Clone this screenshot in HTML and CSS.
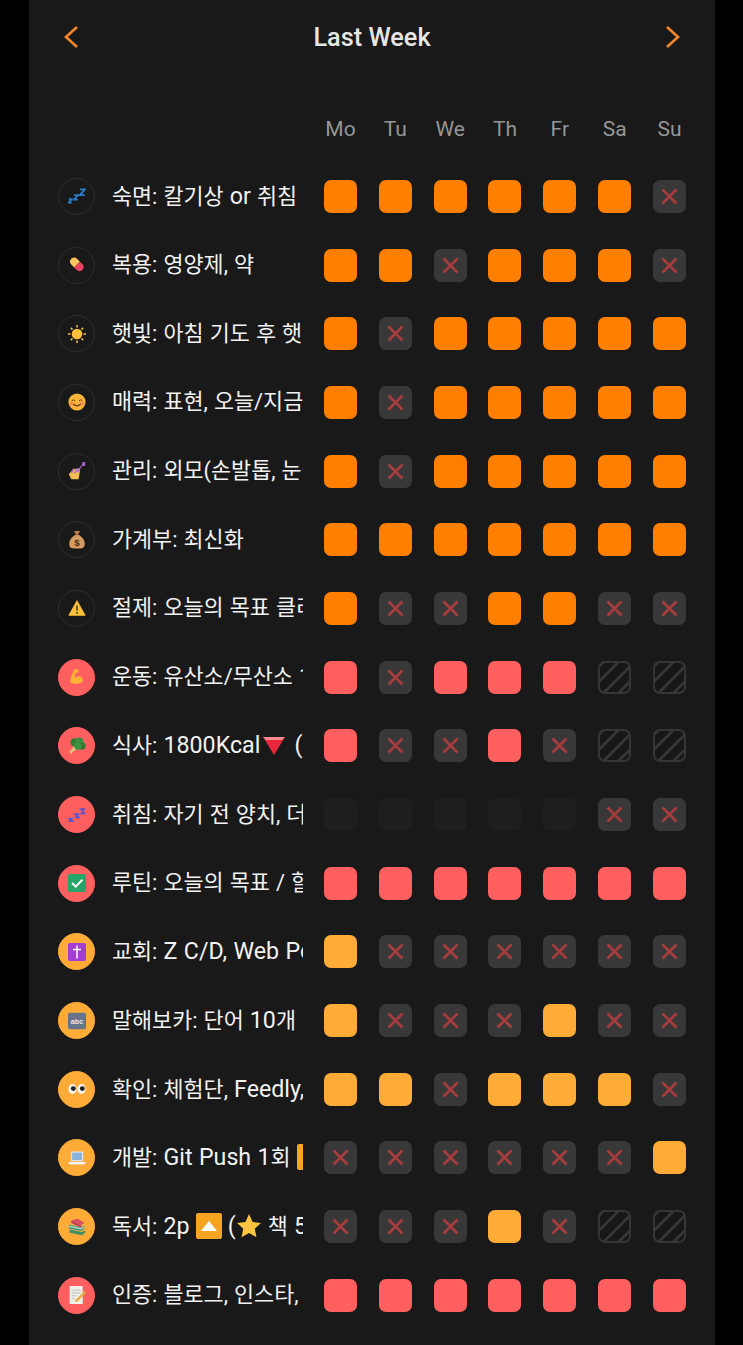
FILE: index.html
```html
<!DOCTYPE html>
<html lang="ko">
<head>
    <meta charset="UTF-8">
    <title>Last Week</title>
    <link rel="stylesheet" href="styles.css">
</head>
<body>
<svg class="defs" width="0" height="0">
    <symbol id="cross" viewBox="0 0 33 33"><path d="M9.500 9.500l14 14M23.500 9.500l-14 14" fill="none" stroke="#a53d3f" stroke-width="2.800"/></symbol>
    <symbol id="down" viewBox="0 0 22 22"><path d="M0 3h22L11 21z" fill="#e8263c"/><path d="M0 3h22l-3 3H3z" fill="#ff8a8f"/></symbol>
    <symbol id="up" viewBox="0 0 26 26"><rect width="26" height="26" rx="2" fill="#f7a423"/><path d="M13 8l8 10H5z" fill="#fff"/></symbol>
    <symbol id="star" viewBox="0 0 24 24"><path d="M12 1l3.300 7.300 7.700.9-5.700 5.300 1.600 7.900-6.900-4-6.900 4 1.600-7.900L1 9.200l7.700-.9z" fill="#fdc63c"/></symbol>
    <symbol id="i-zzz" viewBox="0 0 22 22"><path d="M1 15h3.500l-3.500 4h3.500M7.500 10h4.500l-4.500 5.500h4.500M14.500 3h6l-6 7h6" fill="none" stroke="#2b7cc9" stroke-width="2.200"/></symbol>
    <symbol id="i-pill" viewBox="0 0 22 22"><path d="M4 3.500a5 5 0 0 1 7 0l3.500 3.500-7 7L4 10.500a5 5 0 0 1 0-7z" fill="#fbc65e"/><path d="M14.500 7l3.500 3.500a5 5 0 0 1-7 7L7.500 14z" fill="#ee3f5e"/></symbol>
    <symbol id="i-sun" viewBox="0 0 22 22"><circle cx="11" cy="11" r="6.500" fill="#fdbf3c"/><path d="M11 0v3M11 19v3M0 11h3M19 11h3M3.500 3.500l2 2M16.500 16.500l2 2M18.500 3.500l-2 2M5.500 16.500l-2 2" stroke="#f9c553" stroke-width="1.800"/></symbol>
    <symbol id="i-smile" viewBox="0 0 22 22"><circle cx="11" cy="11" r="10.500" fill="#fbb437"/><circle cx="4.500" cy="13" r="2.500" fill="#f58f4a"/><circle cx="17.500" cy="13" r="2.500" fill="#f58f4a"/><path d="M4.500 9.500q2-2.500 4 0M13.500 9.500q2-2.500 4 0" fill="none" stroke="#5b3a1a" stroke-width="1.200"/><path d="M6.500 13.500q4.500 4.500 9 0" fill="none" stroke="#6d3a1e" stroke-width="1.500"/></symbol>
    <symbol id="i-nail" viewBox="0 0 22 22"><path d="M1 15l5-6 9-1-2 13H4z" fill="#f4bd4c"/><path d="M4 13l4-5M8 14l4-6M12 12l2-4" stroke="#b174c8" stroke-width="2"/><path d="M14 8l5-6" stroke="#9a5bb8" stroke-width="1.500"/><rect x="17.500" y="0" width="3.500" height="5" rx="1" fill="#a864d0"/></symbol>
    <symbol id="i-warn" viewBox="0 0 22 22"><path d="M11 2L21 20H1z" fill="#fdc23a" stroke="#fdc23a" stroke-linejoin="round"/><path d="M11 8v6.500M11 16v2" stroke="#3e3420" stroke-width="1.800"/></symbol>
    <symbol id="i-arm" viewBox="0 0 22 22"><path d="M8 1l5 1.500-.5 3-3 .5-1.500 6q5.500-3.500 9-.5 2.500 3 .5 6-6 3-13 1l-2-1q1-9 6-16.500z" fill="#fbb237"/></symbol>
    <symbol id="i-broc" viewBox="0 0 22 22"><path d="M1 18l3-2 3-5 4 4-5 3-2 3z" fill="#e2bf7c"/><circle cx="8" cy="6.500" r="5" fill="#2f7d32"/><circle cx="14" cy="5" r="4.500" fill="#388e3c"/><circle cx="17" cy="11" r="4.500" fill="#2e7a33"/><circle cx="12" cy="11" r="4.500" fill="#3c9441"/></symbol>
    <symbol id="i-zzp" viewBox="0 0 22 22"><path d="M1 18.500h4l-3.500-3h4.500M8 14h5l-4-4h5M15 9h5l-4-5h5" fill="none" stroke="#5e52c6" stroke-width="2.200"/></symbol>
    <symbol id="i-check" viewBox="0 0 22 22"><rect x="0" y="0" width="22" height="22" rx="2" fill="#27a468"/><path d="M5 11l4.500 4.500L17.500 7" fill="none" stroke="#fff" stroke-width="2.400"/></symbol>
    <symbol id="i-latin" viewBox="0 0 22 22"><rect x="0" y="0" width="22" height="22" rx="2" fill="#a23ed0"/><path d="M11 3v16M6 8h10" stroke="#fff" stroke-width="1.800"/></symbol>
    <symbol id="i-eyes" viewBox="0 0 22 22"><ellipse cx="5.500" cy="11" rx="5" ry="6" fill="#f7f4ee"/><ellipse cx="16.500" cy="11" rx="5" ry="6" fill="#f7f4ee"/><circle cx="6.500" cy="10.500" r="3" fill="#23211f"/><circle cx="17.500" cy="10.500" r="3" fill="#23211f"/></symbol>
    <symbol id="i-laptop" viewBox="0 0 22 22"><rect x="3.500" y="3" width="15" height="12" rx="1" fill="#dfe3ea"/><rect x="5" y="4.500" width="12" height="9" fill="#8ab4dc"/><path d="M0 16h22l-2 3H2z" fill="#f1f2f4"/></symbol>
    <symbol id="i-books" viewBox="0 0 22 22"><path d="M2 14l15 3 4-2v3l-4 3-15-3z" fill="#3e8f68"/><path d="M1 8l15 3 4-2v4l-4 3-15-3z" fill="#4f9e88"/><path d="M1 10l15 3 4-2" fill="none" stroke="#f1e7d4"/><path d="M4 3l8-2 8 5-4 3z" fill="#d94f66"/><path d="M4 3l12 6v3L4 6z" fill="#c23f58"/></symbol>
    <symbol id="i-memo" viewBox="0 0 22 22"><rect x="2" y="0" width="16" height="22" fill="#f2efe9"/><path d="M4.500 5h11M4.500 8.500h11M4.500 12h6M4.500 15.500h4" stroke="#a9b0ba"/><path d="M20 6l2 2-10 11-3.500 1 1-3.500z" fill="#e8b04a"/></symbol>
</svg>

<main class="panel">
    <header class="top">
        <svg class="chev" viewBox="0 0 16 24"><path d="M14 2L3 12l11 10"/></svg>
        <h1>Last Week</h1>
        <svg class="chev" viewBox="0 0 16 24"><path d="M2 2l11 10L2 22"/></svg>
    </header>

    <div class="days">
        <span>Mo</span><span>Tu</span><span>We</span><span>Th</span><span>Fr</span><span>Sa</span><span>Su</span>
    </div>

    <div class="row">
        <span class="badge"><svg><use href="#i-zzz"/></svg></span>
        <span class="label">숙면: 칼기상 <b>or</b> 취침</span>
        <div class="cells orange"><i class="on"></i><i class="on"></i><i class="on"></i><i class="on"></i><i class="on"></i><i class="on"></i><i class="no"><svg><use href="#cross"/></svg></i></div>
    </div>
    <div class="row">
        <span class="badge"><svg><use href="#i-pill"/></svg></span>
        <span class="label">복용: 영양제, 약</span>
        <div class="cells orange"><i class="on"></i><i class="on"></i><i class="no"><svg><use href="#cross"/></svg></i><i class="on"></i><i class="on"></i><i class="on"></i><i class="no"><svg><use href="#cross"/></svg></i></div>
    </div>
    <div class="row">
        <span class="badge"><svg><use href="#i-sun"/></svg></span>
        <span class="label">햇빛: 아침 기도 후 햇빛 보기</span>
        <div class="cells orange"><i class="on"></i><i class="no"><svg><use href="#cross"/></svg></i><i class="on"></i><i class="on"></i><i class="on"></i><i class="on"></i><i class="on"></i></div>
    </div>
    <div class="row">
        <span class="badge"><svg><use href="#i-smile"/></svg></span>
        <span class="label">매력: 표현, 오늘/지금 바로</span>
        <div class="cells orange"><i class="on"></i><i class="no"><svg><use href="#cross"/></svg></i><i class="on"></i><i class="on"></i><i class="on"></i><i class="on"></i><i class="on"></i></div>
    </div>
    <div class="row">
        <span class="badge"><svg><use href="#i-nail"/></svg></span>
        <span class="label">관리: 외모(손발톱, 눈썹)</span>
        <div class="cells orange"><i class="on"></i><i class="no"><svg><use href="#cross"/></svg></i><i class="on"></i><i class="on"></i><i class="on"></i><i class="on"></i><i class="on"></i></div>
    </div>
    <div class="row">
        <span class="badge">
            <svg viewBox="0 0 22 22"><path d="M7.500 0h7l-2 4.500h-3z" fill="#b97d4a"/><path d="M8.500 5h5q7 4.500 7 10.500 0 6-6 6h-7q-6 0-6-6 0-6 7-10.500z" fill="#d59a5f"/><text x="11" y="18" text-anchor="middle" class="svg-text" font-size="12" font-weight="700" fill="#4a2a10">$</text></svg>
        </span>
        <span class="label">가계부: 최신화</span>
        <div class="cells orange"><i class="on"></i><i class="on"></i><i class="on"></i><i class="on"></i><i class="on"></i><i class="on"></i><i class="on"></i></div>
    </div>
    <div class="row">
        <span class="badge"><svg><use href="#i-warn"/></svg></span>
        <span class="label">절제: 오늘의 목표 클리어</span>
        <div class="cells orange"><i class="on"></i><i class="no"><svg><use href="#cross"/></svg></i><i class="no"><svg><use href="#cross"/></svg></i><i class="on"></i><i class="on"></i><i class="no"><svg><use href="#cross"/></svg></i><i class="no"><svg><use href="#cross"/></svg></i></div>
    </div>
    <div class="row">
        <span class="badge red"><svg><use href="#i-arm"/></svg></span>
        <span class="label">운동: 유산소/무산소 1회</span>
        <div class="cells red"><i class="on"></i><i class="no"><svg><use href="#cross"/></svg></i><i class="on"></i><i class="on"></i><i class="on"></i><i class="off"></i><i class="off"></i></div>
    </div>
    <div class="row">
        <span class="badge red"><svg><use href="#i-broc"/></svg></span>
        <span class="label">식사: <b>1800Kcal</b><svg class="emo tri"><use href="#down"/></svg> <b>(</b>단백질)</span>
        <div class="cells red"><i class="on"></i><i class="no"><svg><use href="#cross"/></svg></i><i class="no"><svg><use href="#cross"/></svg></i><i class="on"></i><i class="no"><svg><use href="#cross"/></svg></i><i class="off"></i><i class="off"></i></div>
    </div>
    <div class="row">
        <span class="badge red"><svg><use href="#i-zzp"/></svg></span>
        <span class="label">취침: 자기 전 양치, 더</span>
        <div class="cells red"><i class="blank"></i><i class="blank"></i><i class="blank"></i><i class="blank"></i><i class="blank"></i><i class="no"><svg><use href="#cross"/></svg></i><i class="no"><svg><use href="#cross"/></svg></i></div>
    </div>
    <div class="row">
        <span class="badge red"><svg><use href="#i-check"/></svg></span>
        <span class="label">루틴: 오늘의 목표 / 할 일</span>
        <div class="cells red"><i class="on"></i><i class="on"></i><i class="on"></i><i class="on"></i><i class="on"></i><i class="on"></i><i class="on"></i></div>
    </div>
    <div class="row">
        <span class="badge amber"><svg><use href="#i-latin"/></svg></span>
        <span class="label">교회: <b>Z C/D, Web Post</b></span>
        <div class="cells amber"><i class="on"></i><i class="no"><svg><use href="#cross"/></svg></i><i class="no"><svg><use href="#cross"/></svg></i><i class="no"><svg><use href="#cross"/></svg></i><i class="no"><svg><use href="#cross"/></svg></i><i class="no"><svg><use href="#cross"/></svg></i><i class="no"><svg><use href="#cross"/></svg></i></div>
    </div>
    <div class="row">
        <span class="badge amber">
            <svg viewBox="0 0 22 22"><rect x="0" y="1" width="22" height="20" rx="2" fill="#66758a"/><text x="11" y="14.500" text-anchor="middle" class="svg-text" font-size="9" font-weight="700" fill="#e4e8ee">abc</text></svg>
        </span>
        <span class="label">말해보카: 단어 <b>10</b>개</span>
        <div class="cells amber"><i class="on"></i><i class="no"><svg><use href="#cross"/></svg></i><i class="no"><svg><use href="#cross"/></svg></i><i class="no"><svg><use href="#cross"/></svg></i><i class="on"></i><i class="no"><svg><use href="#cross"/></svg></i><i class="no"><svg><use href="#cross"/></svg></i></div>
    </div>
    <div class="row">
        <span class="badge amber"><svg><use href="#i-eyes"/></svg></span>
        <span class="label">확인: 체험단, <b>Feedly,</b> 메일</span>
        <div class="cells amber"><i class="on"></i><i class="on"></i><i class="no"><svg><use href="#cross"/></svg></i><i class="on"></i><i class="on"></i><i class="on"></i><i class="no"><svg><use href="#cross"/></svg></i></div>
    </div>
    <div class="row">
        <span class="badge amber"><svg><use href="#i-laptop"/></svg></span>
        <span class="label">개발: <b>Git Push 1</b>회 <svg class="emo"><use href="#up"/></svg></span>
        <div class="cells amber"><i class="no"><svg><use href="#cross"/></svg></i><i class="no"><svg><use href="#cross"/></svg></i><i class="no"><svg><use href="#cross"/></svg></i><i class="no"><svg><use href="#cross"/></svg></i><i class="no"><svg><use href="#cross"/></svg></i><i class="no"><svg><use href="#cross"/></svg></i><i class="on"></i></div>
    </div>
    <div class="row">
        <span class="badge amber"><svg><use href="#i-books"/></svg></span>
        <span class="label">독서: <b>2p</b> <svg class="emo"><use href="#up"/></svg> <b>(</b><svg class="emo"><use href="#star"/></svg> 책 <b>5</b>권)</span>
        <div class="cells amber"><i class="no"><svg><use href="#cross"/></svg></i><i class="no"><svg><use href="#cross"/></svg></i><i class="no"><svg><use href="#cross"/></svg></i><i class="on"></i><i class="no"><svg><use href="#cross"/></svg></i><i class="off"></i><i class="off"></i></div>
    </div>
    <div class="row">
        <span class="badge red"><svg><use href="#i-memo"/></svg></span>
        <span class="label">인증: 블로그, 인스타,</span>
        <div class="cells red"><i class="on"></i><i class="on"></i><i class="on"></i><i class="on"></i><i class="on"></i><i class="on"></i><i class="on"></i></div>
    </div>
</main>
</body>
</html>
```

FILE: styles.css
```css
html, body {
    margin: 0;
    height: 100%;
    background: #000;
    overflow: hidden;
}
.defs {
    display: block;
    height: 0;
}
.svg-text {
    font-family: "Liberation Sans", sans-serif;
}
.panel {
    box-sizing: border-box;
    width: 686px;
    height: 1345px;
    margin-left: 29px;
    background: #191919;
    color: #f2f2f2;
    font-family: Roboto, "Noto Sans CJK KR", sans-serif;
}
.top {
    display: flex;
    align-items: center;
    justify-content: space-between;
    height: 74px;
    padding: 0 34px;
}
.top h1 {
    margin: 0;
    font-size: 25.3px;
    font-weight: 500;
    color: #e6e6e6;
}
.chev {
    width: 16px;
    height: 24px;
    fill: none;
    stroke: #f5852a;
    stroke-width: 2.6;
}
.days {
    display: flex;
    justify-content: space-between;
    box-sizing: border-box;
    height: 88px;
    padding: 41px 29px 0 295px;
}
.days span {
    width: 33px;
    text-align: center;
    font-size: 21px;
    line-height: 28px;
    color: #969696;
}
.row {
    display: flex;
    align-items: center;
    height: 68.7px;
    padding: 0 29px;
}
.badge {
    display: flex;
    flex: none;
    align-items: center;
    justify-content: center;
    box-sizing: border-box;
    width: 37px;
    height: 37px;
    border: 1px solid #2c2c2c;
    border-radius: 50%;
}
.badge svg {
    width: 18px;
    height: 18px;
}
.badge.red {
    background: #ff5f5f;
    border-color: #ff5f5f;
}
.badge.amber {
    background: #ffab38;
    border-color: #ffab38;
}
.label {
    flex: none;
    width: 191px;
    margin: 0 21px 0 17px;
    overflow: hidden;
    font-size: 21.8px;
    line-height: 30px;
    word-spacing: 0.7px;
    white-space: nowrap;
}
/* latin runs sit a little larger than the hangul */
.label b {
    font-size: 23.2px;
    font-weight: 400;
}
.emo {
    width: 26px;
    height: 26px;
    vertical-align: -5px;
}
.emo.tri {
    width: 22px;
    height: 22px;
    margin: 0 3px 0 3px;
    vertical-align: -3px;
}
.cells {
    display: flex;
    flex: none;
    justify-content: space-between;
    width: 362px;
}
.cells i {
    display: block;
    box-sizing: border-box;
    width: 33px;
    height: 33px;
    border-radius: 7px;
}
.cells svg {
    display: block;
    width: 33px;
    height: 33px;
}
.orange .on {
    background: #ff8000;
}
.red .on {
    background: #ff5f5f;
}
.amber .on {
    background: #ffab38;
}
.no {
    background: #383838;
}
.blank {
    background: #1e1e1e;
}
.off {
    border: 2px solid #353535;
    background: repeating-linear-gradient(135deg, #353535 0 3px, #171717 3px 11px);
}
```
